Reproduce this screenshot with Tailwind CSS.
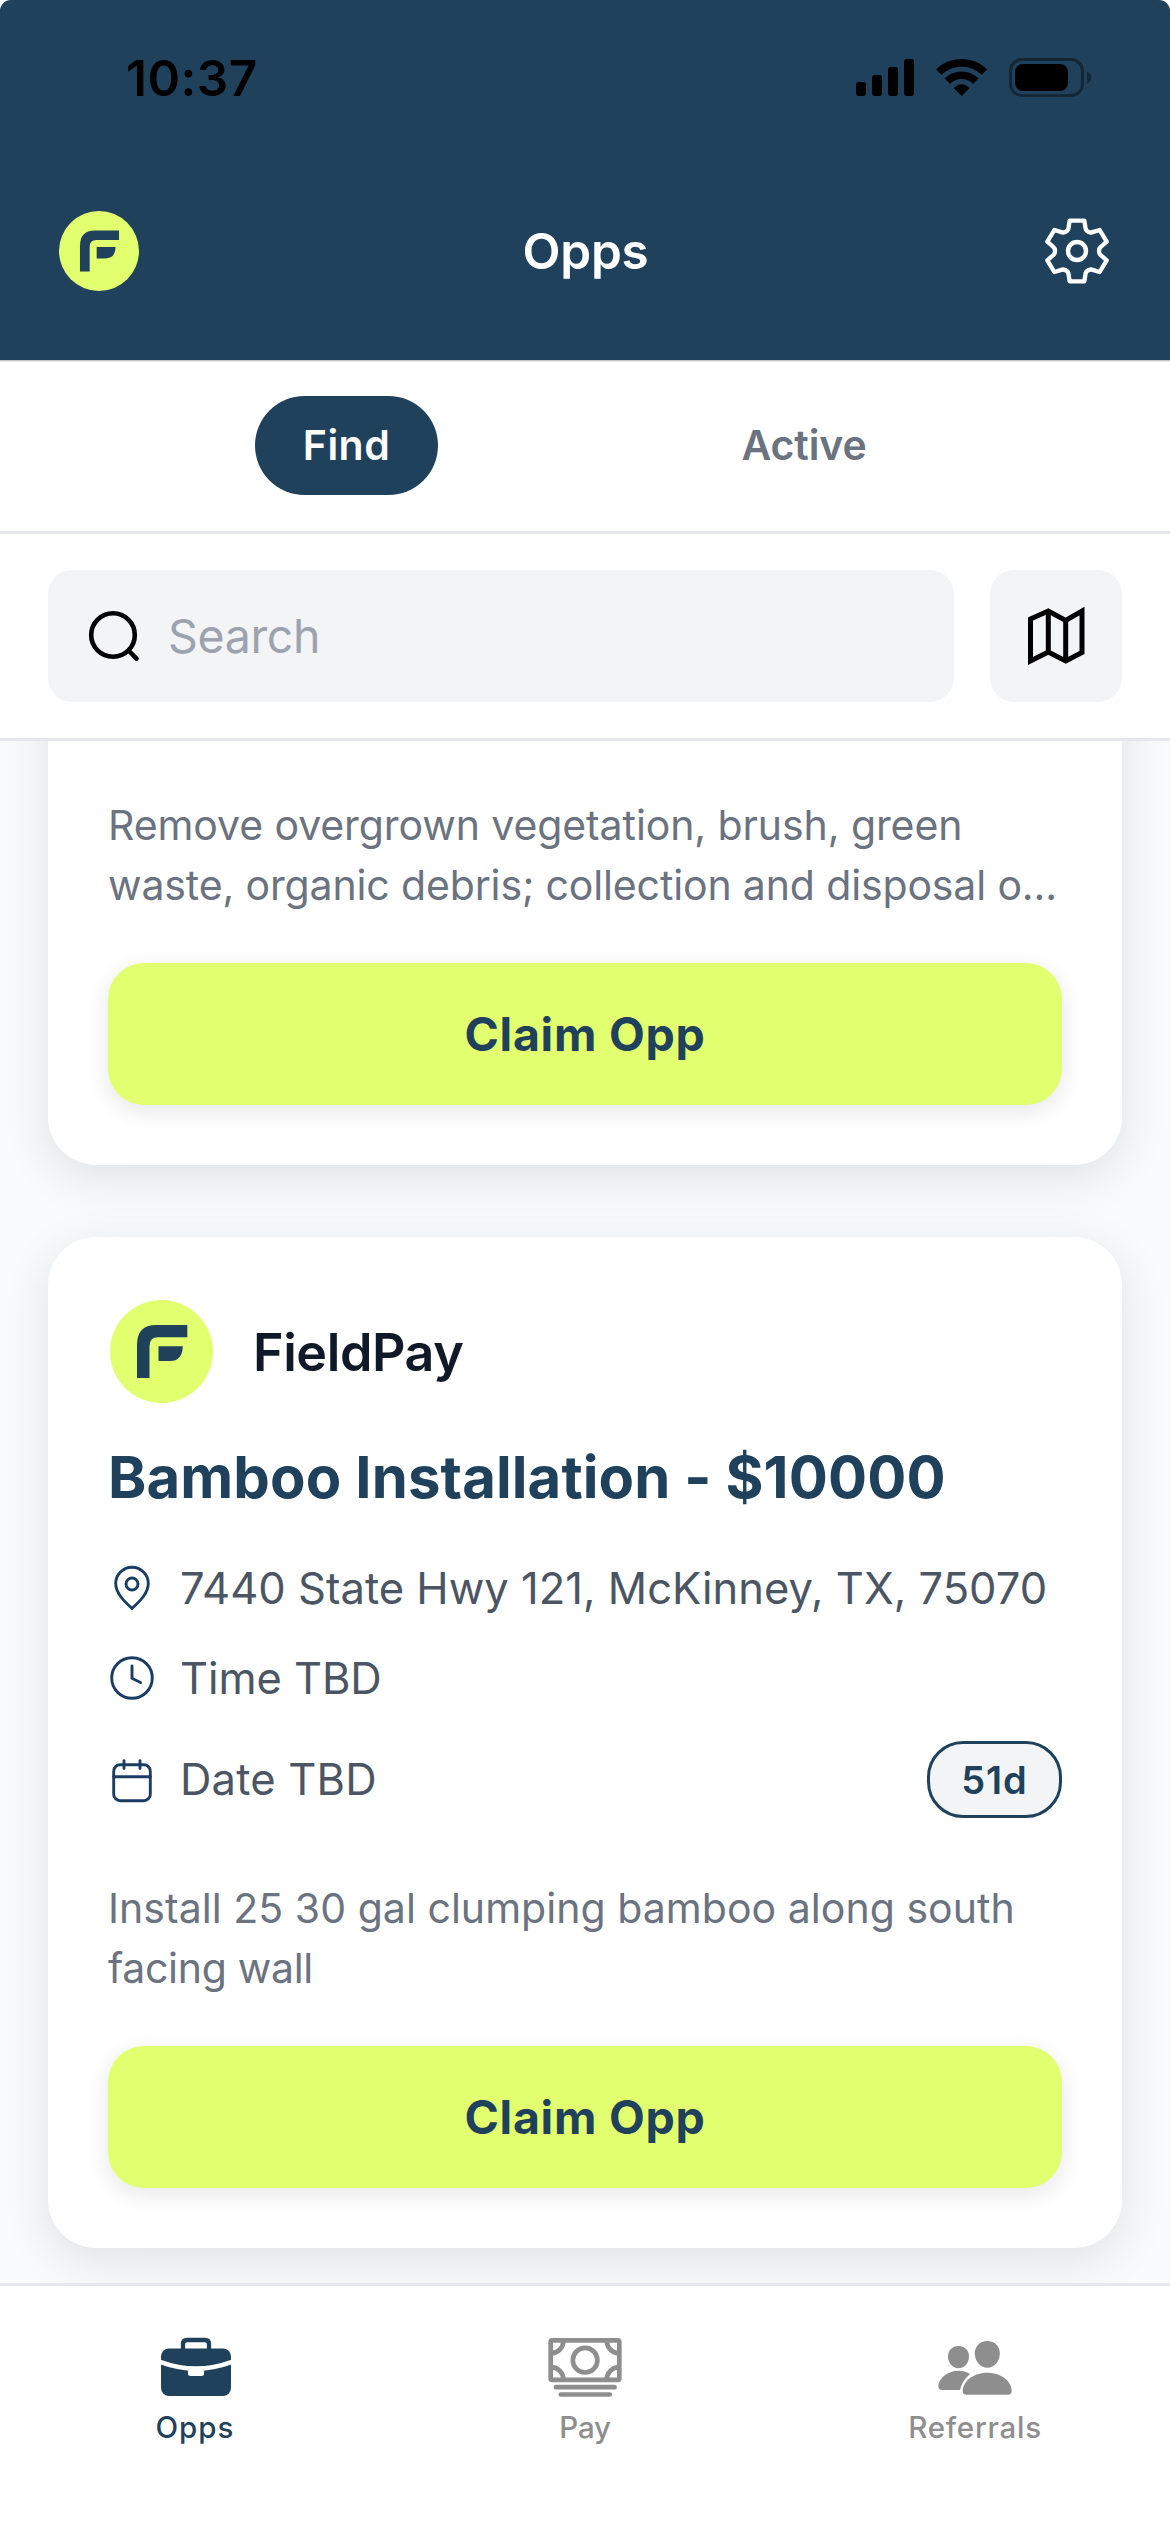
<!DOCTYPE html>
<html lang="en">
<head>
<meta charset="utf-8">
<meta name="viewport" content="width=device-width, initial-scale=1">
<title>Opps</title>
<script src="https://cdn.jsdelivr.net/npm/@tailwindcss/browser@4"></script>
</head>
<body class="bg-white">
<svg class="hidden">
  <symbol id="brand" viewBox="0 0 103 103">
    <circle cx="51.5" cy="51.5" r="51.5" fill="#e1ff6e"/>
    <path fill="#1f415c" d="M27 78V45Q27 25 46 25H77.3V37.2H48Q39.5 37.2 39.5 46V78Z"/>
    <path fill="#1f415c" d="M48.5 46.2H72.8Q72.3 61 60 61H48.5Z"/>
  </symbol>
</svg>
<div class="flex h-[2532px] w-[1170px] flex-col overflow-hidden bg-white font-['Inter',sans-serif]">

  <header class="flex h-[361px] shrink-0 flex-col rounded-t-[11px] border-b border-[#c6c6c6] bg-[#20415c]">
    <div class="flex h-[156px] items-center justify-between pl-[126px] pr-[78px]">
      <span class="pt-[2px] text-[49.5px] leading-none font-semibold tracking-[0.48px] text-black">10:37</span>
      <svg class="h-[40px] w-[236px]" viewBox="856 58 236 40">
        <rect x="856" y="82" width="10" height="14" rx="3"/>
        <rect x="872" y="75" width="10" height="21" rx="3"/>
        <rect x="888" y="67" width="10" height="29" rx="3"/>
        <rect x="904" y="59" width="10" height="37" rx="3"/>
        <g transform="translate(961.6 96) scale(.3333)">
          <path d="M-68.5-72A99.5 99.5 0 0 1 68.5-72M-43-45A62 62 0 0 1 43-45" fill="none" stroke="#000" stroke-width="23"/>
          <path d="M0 0L-24-24Q0-47 24-24Z"/>
        </g>
        <rect x="1010.5" y="59.5" width="72" height="36" rx="11.5" fill="none" stroke="#000" stroke-opacity=".4" stroke-width="3"/>
        <rect x="1015" y="64" width="53" height="27" rx="8"/>
        <path d="M1087 71.5Q1091.300 73.500 1091.300 77.800Q1091.300 82 1087 84Z" fill-opacity=".4"/>
      </svg>
    </div>
    <div class="flex h-[190px] items-center justify-between pr-[51px] pl-[59px]">
      <svg class="h-20 w-20"><use href="#brand"/></svg>
      <h1 class="pt-[2px] pr-[3px] text-[49.5px] leading-none font-semibold tracking-[-0.2px] text-white">Opps</h1>
      <svg class="h-[84px] w-[84px]" viewBox="-126 -126 252 252" fill="none" stroke="#fff" stroke-width="13" stroke-linejoin="round">
        <path d="M-22-91H22L26-66Q28-58 42-55L68-63L89-28L71-12Q66-8 66 0Q66 8 71 12L89 28L68 63L42 55Q28 58 26 66L22 91H-22L-26 66Q-28 58-42 55L-68 63L-89 28L-71 12Q-66 8-66 0Q-66-8-71-12L-89-28L-68-63L-42-55Q-28-58-26-66Z"/>
        <circle r="27"/>
      </svg>
    </div>
  </header>

  <nav class="flex h-[173px] shrink-0 items-center justify-evenly border-t border-b-3 border-t-[#e8e8e8] border-b-[#e5e7eb] bg-white pb-[2px] text-[41px] leading-none font-semibold">
    <a class="flex h-[99px] w-[183px] items-center justify-center rounded-full bg-[#20415c] tracking-[0.46px] text-white">Find</a>
    <a class="flex h-[99px] w-[222px] items-center justify-center rounded-full tracking-[-0.1px] text-[#6b7280]">Active</a>
  </nav>

  <div class="flex h-[207px] shrink-0 items-center gap-9 border-b-3 border-[#e5e7eb] bg-white px-12">
    <div class="flex h-[132px] flex-1 items-center gap-[26px] rounded-3xl bg-[#f3f4f6] pl-9">
      <svg class="h-[60px] w-[58px]" viewBox="84 606 58 60" fill="none" stroke="#000" stroke-width="4.600" stroke-linecap="round">
        <circle cx="113" cy="635" r="21.800"/><path d="M130 652L136.500 658.700"/>
      </svg>
      <span class="text-[46.5px] leading-none tracking-[-0.36px] text-[#9ca3af]">Search</span>
    </div>
    <button class="flex h-[132px] w-[132px] items-center justify-center rounded-3xl bg-[#f3f4f6]">
      <svg class="h-[60px] w-[60px]" viewBox="1026 606 60 60" fill="none" stroke="#000" stroke-width="5">
        <path d="M1030.500 619L1048.300 611L1065.700 620.500L1082 611V652.500L1065.700 661L1048.300 652L1030.500 661ZM1048.300 611V652M1065.700 620.500V661"/>
      </svg>
    </button>
  </div>

  <main class="flex min-h-0 flex-1 flex-col gap-[72px] overflow-hidden bg-[#f9fafb] px-12">
    <article class="-mt-[100px] flex shrink-0 flex-col rounded-[48px] bg-white px-[60px] pt-[154px] pb-[60px] shadow-[0_12px_48px_rgba(0,0,0,0.1)]">
      <p class="text-[41px] leading-[60px] text-[#6b7280]"><span class="tracking-[-0.09px]">Remove overgrown vegetation, brush, green</span><br><span class="tracking-[-0.14px]">waste, organic debris; collection and disposal o...</span></p>
      <button class="mt-12 flex h-[142px] items-center justify-center rounded-[36px] bg-[#e1ff6e] text-[46.5px] leading-none font-bold tracking-[0.74px] text-[#1f415c] shadow-[0_6px_24px_rgba(0,0,0,0.1)]">Claim Opp</button>
    </article>

    <article class="flex shrink-0 flex-col rounded-[48px] bg-white p-[60px] shadow-[0_12px_48px_rgba(0,0,0,0.1)]">
      <div class="flex h-[108px] items-center gap-9 pl-[2px]">
        <svg class="h-[103px] w-[103px]"><use href="#brand"/></svg>
        <span class="pt-[3px] pl-[4px] text-[52px] leading-none font-semibold tracking-[-0.41px] text-[#111827]">FieldPay</span>
      </div>
      <h2 class="mt-[30px] text-[58px] leading-[84px] font-bold tracking-[0.12px] whitespace-nowrap text-[#1f415c]">Bamboo Installation - $10000</h2>
      <div class="mt-[39px] flex h-[60px] items-center gap-6">
        <svg class="h-12 w-12 shrink-0" viewBox="0 0 48 48" fill="none" stroke="#1c3d62" stroke-width="2.900" stroke-linejoin="round">
          <path d="M24 44.500C19 39.500 7.700 30.500 7.700 19.500A16.300 16.300 0 0 1 40.300 19.500C40.300 30.500 29 39.500 24 44.500Z"/><circle cx="24" cy="20" r="6"/>
        </svg>
        <span class="pt-[2px] text-[43.5px] leading-none tracking-[0.02px] whitespace-nowrap text-[#4b5563]">7440 State Hwy 121, McKinney, TX, 75070</span>
      </div>
      <div class="mt-[30px] flex h-[60px] items-center gap-6">
        <svg class="h-12 w-12 shrink-0" viewBox="0 0 48 48" fill="none" stroke="#1c3d62" stroke-width="2.900" stroke-linecap="round" stroke-linejoin="round">
          <circle cx="24" cy="24" r="20.300"/><path d="M24 12V24.300L32.500 28.500"/>
        </svg>
        <span class="pt-[2px] text-[43.5px] leading-none tracking-[-0.08px] text-[#4b5563]">Time TBD</span>
      </div>
      <div class="mt-[33px] flex h-[77px] items-center gap-6">
        <svg class="h-12 w-12 shrink-0" viewBox="0 0 48 48" fill="none" stroke="#1c3d62" stroke-width="2.900" stroke-linecap="round">
          <rect x="5.700" y="8.700" width="36.600" height="36" rx="6.500"/><path d="M5.700 20.700H42.300M16 4.800V12.500M32 4.800V12.500"/>
        </svg>
        <span class="flex-1 text-[43.5px] leading-none tracking-[0.2px] text-[#4b5563]">Date TBD</span>
        <span class="flex h-[77px] w-[135px] items-center justify-center rounded-[36px] border-3 border-[#1f415c] bg-[#f3f4f6] text-[38px] leading-none font-semibold tracking-[1px] text-[#1f415c]">51d</span>
      </div>
      <p class="mt-[60px] text-[41px] leading-[60px] text-[#6b7280]"><span class="tracking-[0.04px]">Install 25 30 gal clumping bamboo along south</span><br><span class="tracking-[-0.3px]">facing wall</span></p>
      <button class="mt-12 flex h-[142px] items-center justify-center rounded-[36px] bg-[#e1ff6e] text-[46.5px] leading-none font-bold tracking-[0.74px] text-[#1f415c] shadow-[0_6px_24px_rgba(0,0,0,0.1)]">Claim Opp</button>
    </article>
  </main>

  <footer class="grid h-[249px] shrink-0 grid-cols-3 border-t-3 border-[#e5e7eb] bg-white pt-[44px] text-[29.5px] leading-[36px] font-medium text-[#8e8e8f]">
    <a class="flex flex-col items-center gap-[13px] text-[#1f415c]">
      <svg class="h-[66px] w-[80px]" viewBox="155 2330 80 66">
        <path d="M183 2350V2344Q183 2340 187 2340H205Q209 2340 209 2344V2350" fill="none" stroke="#20415c" stroke-width="4.300"/>
        <rect x="161" y="2348.500" width="70" height="47.500" rx="8" fill="#20415c"/>
        <path d="M160 2361.800Q196 2375.200 232 2361.800" fill="none" stroke="#fff" stroke-width="4.500"/>
        <path d="M188 2367H204V2373.500Q204 2376 201.500 2376H190.500Q188 2376 188 2373.500Z" fill="#fff"/>
      </svg>
      <span class="tracking-[1px]">Opps</span>
    </a>
    <a class="flex flex-col items-center gap-[13px]">
      <svg class="-mb-[2px] h-[68px] w-[80px]" viewBox="545.600 2330 80 68" fill="none" stroke="#8e8e8f" stroke-width="4.700" stroke-linecap="round">
        <rect x="551.300" y="2340.300" width="68.600" height="39.600" rx="1.500"/>
        <circle cx="585.700" cy="2360.200" r="12.300"/>
        <g stroke-linecap="butt"><path d="M564 2341A12.500 12.500 0 0 1 551.500 2353.300M607.400 2341A12.500 12.500 0 0 0 619.900 2353.300M564 2380A12.500 12.500 0 0 0 551.500 2367.200M607.400 2380A12.500 12.500 0 0 1 619.900 2367.200"/></g>
        <path d="M556.500 2387.200H615.200M561.400 2394.500H610.300"/>
      </svg>
      <span class="tracking-[-0.24px]">Pay</span>
    </a>
    <a class="flex flex-col items-center gap-[13px]">
      <svg class="h-[66px] w-[80px]" viewBox="935 2330 80 66" fill="#8e8e8f">
        <path d="M987.300 2341C995 2341 999.800 2346.500 999.800 2353.500C999.800 2361 994.500 2367.800 987.300 2367.800C980.100 2367.800 974.800 2361 974.800 2353.500C974.800 2346.500 979.600 2341 987.300 2341Z"/>
        <path d="M958.500 2346C964.800 2346 969 2350.500 969 2356.500C969 2362.800 964.500 2368.300 958.500 2368.300C952.500 2368.300 948 2362.800 948 2356.500C948 2350.500 952.200 2346 958.500 2346Z"/>
        <path d="M987.300 2372.700C1002 2372.700 1011.700 2382 1011.700 2391Q1011.700 2394.700 1008 2394.700H966.500Q962.700 2394.700 962.700 2391C962.700 2382 972.500 2372.700 987.300 2372.700Z"/>
        <path d="M958.500 2370.700Q965 2370.700 970 2374Q962 2381 960 2390H942Q938.300 2390 938.300 2386C938.300 2379 947 2370.700 958.500 2370.700Z"/>
      </svg>
      <span class="tracking-[0.75px]">Referrals</span>
    </a>
  </footer>
</div>
</body>
</html>
